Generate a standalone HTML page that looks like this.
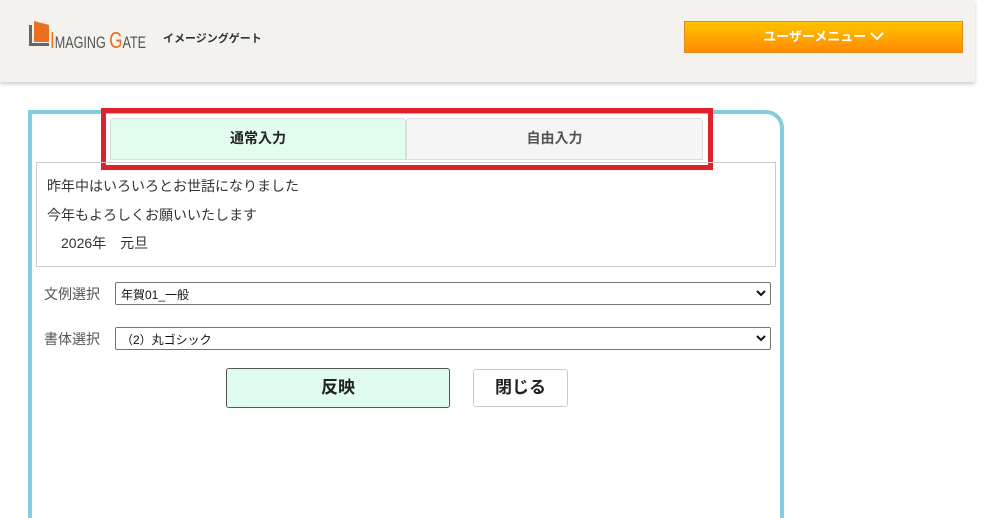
<!DOCTYPE html>
<html><head><meta charset="utf-8"><style>
*{box-sizing:border-box;margin:0;padding:0}
html,body{width:987px;height:518px;overflow:hidden}
body{background:#fff;font-family:"Liberation Sans","Noto Sans CJK JP",sans-serif;position:relative;color:#333}
.hd{position:absolute;left:0;top:0;width:975px;height:82px;background:#f3f2ee;box-shadow:0 2px 4px rgba(0,0,0,.2)}
.logo{position:absolute;left:29px;top:21px}
.lt{position:absolute;left:50px;top:27px;font-size:17px;color:#555;white-space:nowrap;transform:scaleX(.74);transform-origin:left;font-family:"Liberation Sans Narrow","Liberation Sans",sans-serif}
.lt b{color:#e8701f;font-weight:normal;font-size:23px}
.jp{position:absolute;left:163px;top:30px;font-size:11px;color:#333;font-weight:bold}
.ob{position:absolute;left:684px;top:21px;width:279px;height:32px;background:linear-gradient(#ffc400,#ff8a00);border:1px solid #e08a20;color:#fff;font-size:13px;font-weight:bold;text-align:center;line-height:30px}
.panel{position:absolute;left:28px;top:110px;width:756px;height:408px;border:4px solid #84cde0;border-bottom:none;border-radius:0 18px 0 0}
.red{position:absolute;left:101px;top:108px;width:612px;height:62px;border:5px solid #e0202a}
.tab{position:absolute;top:118px;height:42px;border:1px solid #ddd;border-radius:4px 4px 0 0;font-size:14px;font-weight:bold;text-align:center;line-height:38px}
.ta{position:absolute;left:36px;top:162px;width:740px;height:105px;border:1px solid #ccc;font-size:14px;color:#333;padding:9px 0 0 10px;line-height:28.5px}
.lab{position:absolute;left:44px;font-size:14px;color:#555}
.sel{position:absolute;left:115px;width:656px;height:23px;border:1px solid #767676;border-radius:2px;font-size:12px;color:#111;padding:3px 0 0 5px}
.sel svg{position:absolute;right:4px;top:7px}
.btn{position:absolute;border-radius:3px;font-size:17px;font-weight:bold;text-align:center;color:#222}
</style></head><body>
<div class="hd">
<svg class="logo" width="20" height="26" viewBox="0 0 20 26"><path d="M0 4h3v18h17v3H0z" fill="#666"/><path d="M5 0l15 4v17H5z" fill="#e8701f"/></svg>
<div class="lt"><b>I</b>MAGING <b>G</b>ATE</div>
<div class="jp">イメージングゲート</div>
<div class="ob">ユーザーメニュー <svg width="14" height="9" viewBox="0 0 14 9" style="vertical-align:0"><path d="M1 1l6 6 6-6" stroke="#fff" stroke-width="2" fill="none"/></svg></div>
</div>
<div class="panel"></div>
<div class="tab" style="left:110px;width:296px;background:#e2fcee;color:#222">通常入力</div>
<div class="tab" style="left:406px;width:297px;background:#f5f5f5;color:#555">自由入力</div>
<div class="red"></div>
<div class="ta">昨年中はいろいろとお世話になりました<br>今年もよろしくお願いいたします<br>　2026年　元旦</div>
<div class="lab" style="top:284px">文例選択</div>
<div class="sel" style="top:282px">年賀01_一般<svg width="10" height="7"><path d="M1 1l4 4 4-4" stroke="#111" stroke-width="2" fill="none"/></svg></div>
<div class="lab" style="top:329px">書体選択</div>
<div class="sel" style="top:327px">（2）丸ゴシック<svg width="10" height="7"><path d="M1 1l4 4 4-4" stroke="#111" stroke-width="2" fill="none"/></svg></div>
<div class="btn" style="left:226px;top:368px;width:224px;height:40px;background:#e0fcee;border:1px solid #555;line-height:38px">反映</div>
<div class="btn" style="left:473px;top:369px;width:95px;height:38px;background:#fff;border:1px solid #ccc;line-height:36px">閉じる</div>
</body></html>
